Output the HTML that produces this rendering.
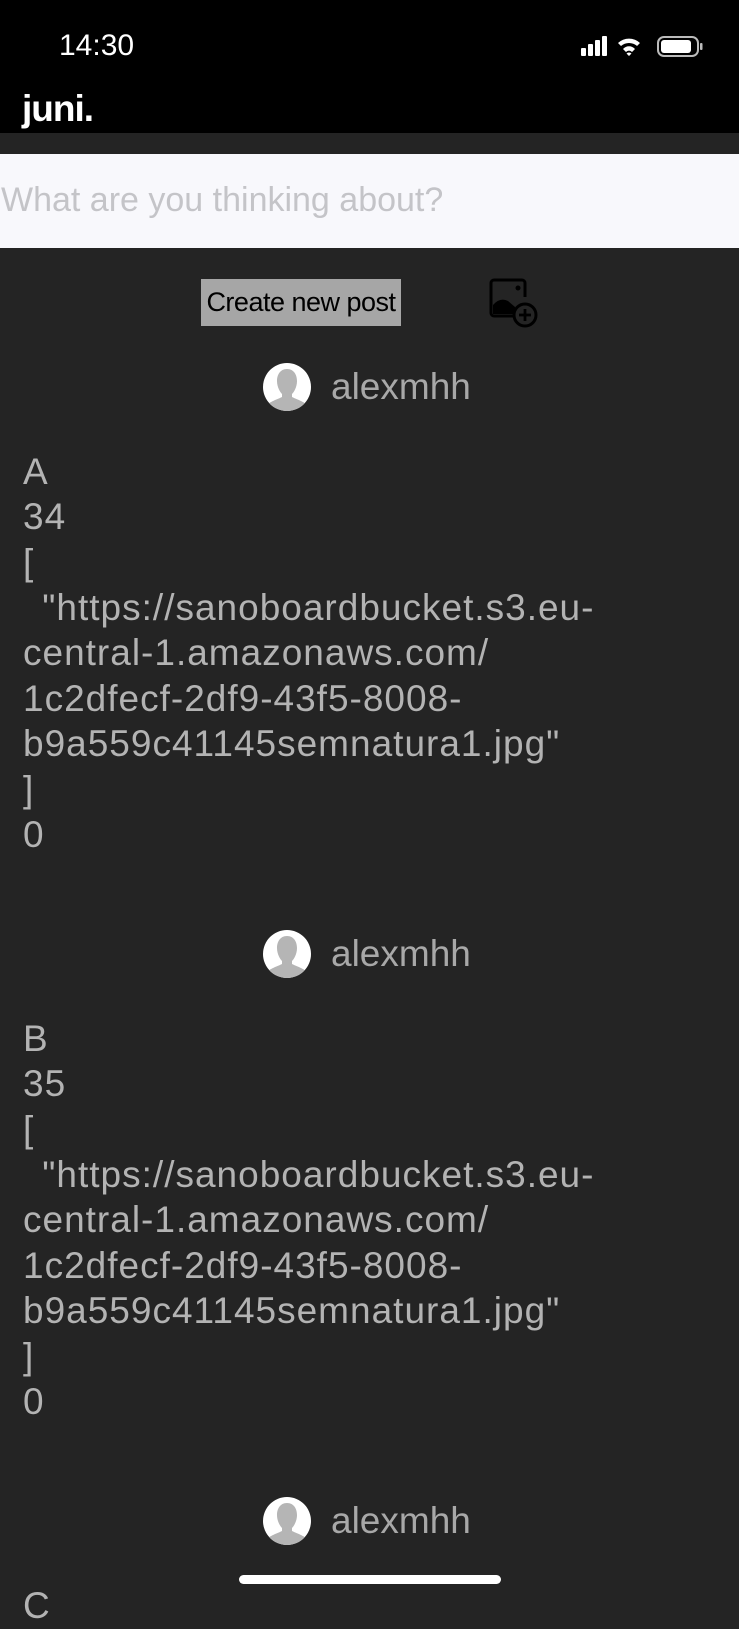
<!DOCTYPE html>
<html><head><meta charset="utf-8"><style>
*{margin:0;padding:0;box-sizing:border-box}
body{width:739px;height:1600px;background:#242424;position:relative;overflow:hidden;font-family:"Liberation Sans",sans-serif}
.abs{position:absolute}
.ln{position:absolute;left:23px;font-size:37px;color:#b3b3b3;white-space:pre;line-height:46px;letter-spacing:1px}
.user{position:absolute;left:331px;font-size:37px;color:#a8a8a8;line-height:40px}
.av{position:absolute;left:263px;width:48px;height:48px;border-radius:50%;background:#fff;overflow:hidden}
</style></head><body>
<div class="abs" style="left:0;top:0;width:739px;height:133px;background:#000"></div>
<div class="abs" style="left:59px;top:29px;font-size:30px;color:#fff;font-weight:500">14:30</div>
<svg class="abs" style="left:578px;top:34px" width="136" height="26" viewBox="0 0 136 26">
<rect x="3" y="14" width="5" height="8" rx="1" fill="#fff"/><rect x="10" y="10" width="5" height="12" rx="1" fill="#fff"/><rect x="17" y="6" width="5" height="16" rx="1" fill="#fff"/><rect x="24" y="2" width="5" height="20" rx="1" fill="#fff"/>
<path d="M40 9 A16 16 0 0 1 62 9 L59 12 A12 12 0 0 0 43 12Z M45 15 A8 8 0 0 1 57 15 L54 18 A4 4 0 0 0 48 18Z M51 22 L48.5 19.5 A3.5 3.5 0 0 1 53.5 19.5Z" fill="#fff"/>
<rect x="80" y="3" width="40" height="19" rx="6" fill="none" stroke="#bbb" stroke-width="2"/><rect x="83" y="6" width="30" height="13" rx="3" fill="#fff"/><rect x="122" y="9" width="2.5" height="7" rx="1" fill="#bbb"/>
</svg>
<div class="abs" style="left:22px;top:88px;font-size:37px;color:#fff;font-weight:bold;letter-spacing:-1px">juni.</div>
<div class="abs" style="left:0;top:154px;width:739px;height:94px;background:#f8f8fc"></div>
<div class="abs" style="left:1px;top:181px;font-size:34px;color:#c4c4c8">What are you thinking about?</div>
<div class="abs" style="left:201px;top:279px;width:200px;height:47px;background:#a6a6a6;font-size:27px;color:#000;line-height:47px;text-align:center;white-space:nowrap;letter-spacing:-0.5px">Create new post</div>
<svg class="abs" style="left:488px;top:277px" width="52" height="52" viewBox="0 0 52 52">
<path d="M26 39 H6 a3 3 0 0 1 -3 -3 V6 a3 3 0 0 1 3 -3 H34 a3 3 0 0 1 3 3 V20" fill="none" stroke="#000" stroke-width="3"/>
<circle cx="30" cy="11" r="2.5" fill="#000"/>
<path d="M5 37 V28 Q12 20 20 24 L27 30 V37Z" fill="#000"/>
<circle cx="37" cy="38" r="11" fill="none" stroke="#000" stroke-width="3"/>
<path d="M37 32 V44 M31 38 H43" stroke="#000" stroke-width="2.8"/>
</svg>

<div class="abs" style="left:0;top:0;width:739px">
 <div class="av" style="top:363px"><svg width="48" height="48" viewBox="0 0 48 48"><path d="M24 6 c7 0 10 6 10 12 c0 6-3 11-5 13 v3 c6 3 14 5 16 10 v4 H3 v-4 c2-5 10-7 16-10 v-3 c-2-2-5-7-5-13 c0-6 3-12 10-12z" fill="#b5b5b5"/></svg></div>
 <div class="user" style="top:367px">alexmhh</div>
 <div class="ln" style="top:449px">A</div>
 <div class="ln" style="top:494px">34</div>
 <div class="ln" style="top:540px">[</div>
 <div class="ln" style="top:585px;left:31px"> "https://sanoboardbucket.s3.eu-</div>
 <div class="ln" style="top:630px">central-1.amazonaws.com/</div>
 <div class="ln" style="top:676px">1c2dfecf-2df9-43f5-8008-</div>
 <div class="ln" style="top:721px">b9a559c41145semnatura1.jpg"</div>
 <div class="ln" style="top:767px">]</div>
 <div class="ln" style="top:812px">0</div>
</div>
<div class="abs" style="left:0;top:567px;width:739px">
 <div class="av" style="top:363px"><svg width="48" height="48" viewBox="0 0 48 48"><path d="M24 6 c7 0 10 6 10 12 c0 6-3 11-5 13 v3 c6 3 14 5 16 10 v4 H3 v-4 c2-5 10-7 16-10 v-3 c-2-2-5-7-5-13 c0-6 3-12 10-12z" fill="#b5b5b5"/></svg></div>
 <div class="user" style="top:367px">alexmhh</div>
 <div class="ln" style="top:449px">B</div>
 <div class="ln" style="top:494px">35</div>
 <div class="ln" style="top:540px">[</div>
 <div class="ln" style="top:585px;left:31px"> "https://sanoboardbucket.s3.eu-</div>
 <div class="ln" style="top:630px">central-1.amazonaws.com/</div>
 <div class="ln" style="top:676px">1c2dfecf-2df9-43f5-8008-</div>
 <div class="ln" style="top:721px">b9a559c41145semnatura1.jpg"</div>
 <div class="ln" style="top:767px">]</div>
 <div class="ln" style="top:812px">0</div>
</div>
<div class="abs" style="left:0;top:1134px;width:739px">
 <div class="av" style="top:363px"><svg width="48" height="48" viewBox="0 0 48 48"><path d="M24 6 c7 0 10 6 10 12 c0 6-3 11-5 13 v3 c6 3 14 5 16 10 v4 H3 v-4 c2-5 10-7 16-10 v-3 c-2-2-5-7-5-13 c0-6 3-12 10-12z" fill="#b5b5b5"/></svg></div>
 <div class="user" style="top:367px">alexmhh</div>
 <div class="ln" style="top:449px">C</div>
</div>
<div class="abs" style="left:239px;top:1575px;width:262px;height:9px;border-radius:5px;background:#fff"></div>
</body></html>
